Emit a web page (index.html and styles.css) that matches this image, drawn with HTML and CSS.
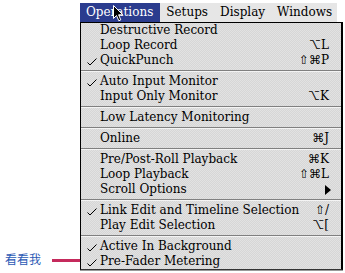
FILE: index.html
```html
<!DOCTYPE html>
<html>
<head>
<meta charset="utf-8">
<link rel="stylesheet" href="styles.css">
</head>
<body>
<div class="screen">
  <div class="side">
    <div class="callout">
      <span class="callout-text">看看我</span>
      <span class="callout-line"></span>
    </div>
  </div>
  <div class="app">
    <div class="menubar">
      <span class="title active">Operations</span>
      <span class="title">Setups</span>
      <span class="title">Display</span>
      <span class="title">Windows</span>
      <svg class="cursor" width="11" height="17" viewBox="0 0 11 17"><path d="M0.5 0.5 L0.5 13.5 L3.5 10.5 L5.8 15.8 L7.8 14.9 L5.6 9.8 L9.8 9.8 Z" fill="#000" stroke="#fff" stroke-width="1"/></svg>
    </div>
    <div class="menu">
      <div class="item"><span class="check"></span><span class="label">Destructive Record</span><span class="key"></span></div>
      <div class="item"><span class="check"></span><span class="label">Loop Record</span><span class="key">⌥L</span></div>
      <div class="item"><span class="check"><svg width="10" height="8" viewBox="0 0 10 8"><path d="M0.5 4.5 L3 7 L9.5 0.5" fill="none" stroke="#000" stroke-width="1"/></svg></span><span class="label">QuickPunch</span><span class="key">⇧⌘P</span></div>
      <div class="sep"></div>
      <div class="item"><span class="check"><svg width="10" height="8" viewBox="0 0 10 8"><path d="M0.5 4.5 L3 7 L9.5 0.5" fill="none" stroke="#000" stroke-width="1"/></svg></span><span class="label">Auto Input Monitor</span><span class="key"></span></div>
      <div class="item"><span class="check"></span><span class="label">Input Only Monitor</span><span class="key">⌥K</span></div>
      <div class="sep"></div>
      <div class="item"><span class="check"></span><span class="label">Low Latency Monitoring</span><span class="key"></span></div>
      <div class="sep"></div>
      <div class="item"><span class="check"></span><span class="label">Online</span><span class="key">⌘J</span></div>
      <div class="sep"></div>
      <div class="item"><span class="check"></span><span class="label">Pre/Post-Roll Playback</span><span class="key">⌘K</span></div>
      <div class="item"><span class="check"></span><span class="label">Loop Playback</span><span class="key">⇧⌘L</span></div>
      <div class="item"><span class="check"></span><span class="label">Scroll Options</span><span class="key"><span class="arrow"></span></span></div>
      <div class="sep"></div>
      <div class="item"><span class="check"><svg width="10" height="8" viewBox="0 0 10 8"><path d="M0.5 4.5 L3 7 L9.5 0.5" fill="none" stroke="#000" stroke-width="1"/></svg></span><span class="label">Link Edit and Timeline Selection</span><span class="key">⇧/</span></div>
      <div class="item"><span class="check"></span><span class="label">Play Edit Selection</span><span class="key">⌥[</span></div>
      <div class="sep"></div>
      <div class="item"><span class="check"><svg width="10" height="8" viewBox="0 0 10 8"><path d="M0.5 4.5 L3 7 L9.5 0.5" fill="none" stroke="#000" stroke-width="1"/></svg></span><span class="label">Active In Background</span><span class="key"></span></div>
      <div class="item"><span class="check"><svg width="10" height="8" viewBox="0 0 10 8"><path d="M0.5 4.5 L3 7 L9.5 0.5" fill="none" stroke="#000" stroke-width="1"/></svg></span><span class="label">Pre-Fader Metering</span><span class="key"></span></div>
    </div>
  </div>
</div>
</body>
</html>
```

FILE: styles.css
```css
html, body {
  margin: 0;
  padding: 0;
  background: #fff;
}
.screen {
  width: 345px;
  height: 273px;
  display: flex;
  padding-top: 3px;
  box-sizing: border-box;
  overflow: hidden;
}
.side {
  width: 80px;
  flex: none;
  display: flex;
  flex-direction: column;
  justify-content: flex-end;
  padding-bottom: 7px;
  box-sizing: border-box;
}
.callout {
  display: flex;
  align-items: center;
  padding-left: 5px;
}
.callout-text {
  font-family: "Noto Sans CJK SC", sans-serif;
  font-size: 12px;
  line-height: 14px;
  color: #2c5ab5;
}
.callout-line {
  display: block;
  margin-left: 11px;
  flex: 1;
  height: 3px;
  margin-top: 3px;
  background: #c52a5c;
}
.app {
  width: 263px;
  flex: none;
  font-family: "DejaVu Serif", serif;
  font-size: 12px;
  color: #000;
}
.menubar {
  position: relative;
  display: flex;
  height: 19px;
  width: 257px;
  background: #e6e6e6;
}
.title {
  padding: 0 6px;
  line-height: 19px;
  font-size: 12px;
}
.title.active {
  background: #2b3c8e;
  color: #fff;
  padding: 0 7px 0 6px;
}
.cursor {
  position: absolute;
  left: 33px;
  top: 2px;
}
.menu {
  height: 248px;
  box-sizing: border-box;
  border-top: 1px solid #000;
  border-left: 1px solid #000;
  border-right: 2px solid #000;
  border-bottom: 1px solid #333;
  background-color: #dcdcdc;
  background-image: repeating-conic-gradient(#d6d6d6 0 25%, #e2e2e2 0 50%);
  background-size: 2px 2px;
  box-shadow: 0 1px 0 #9a9a9a;
}
.item {
  display: flex;
  align-items: center;
  height: 15px;
  line-height: 15px;
  padding-right: 12px;
}
.check {
  width: 19px;
  flex: none;
  display: flex;
  justify-content: center;
  padding-left: 2px;
  box-sizing: border-box;
}
.check svg {
  display: block;
  margin-top: 2px;
}
.label {
  flex: 1;
  white-space: nowrap;
}
.key {
  font-family: "DejaVu Serif", "DejaVu Sans", serif;
  font-size: 12px;
  white-space: nowrap;
  display: flex;
  align-items: center;
}
.arrow {
  display: block;
  width: 0;
  height: 0;
  border-top: 5px solid transparent;
  border-bottom: 5px solid transparent;
  border-left: 6px solid #000;
  margin-right: -2px;
}
.sep {
  height: 6px;
  display: flex;
  flex-direction: column;
  justify-content: center;
}
.sep::before {
  content: "";
  display: block;
  height: 1px;
  background: #808080;
}
.sep::after {
  content: "";
  display: block;
  height: 1px;
  background: #f4f4f4;
}
```
